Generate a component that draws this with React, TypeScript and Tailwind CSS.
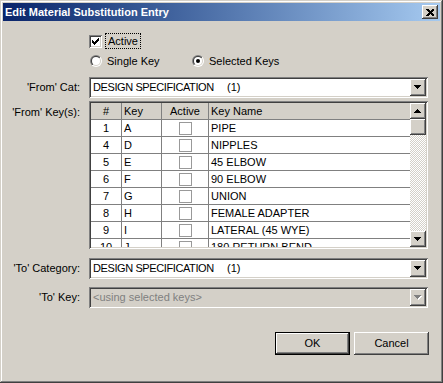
import React from "react";

const RAISED =
  "shadow-[inset_-1px_-1px_0_#404040,inset_1px_1px_0_#ffffff,inset_-2px_-2px_0_#808080,inset_2px_2px_0_#d4d0c8]";
const SUNKEN =
  "shadow-[inset_1px_1px_0_#808080,inset_-1px_-1px_0_#ffffff,inset_2px_2px_0_#404040,inset_-2px_-2px_0_#d4d0c8]";

function Tri({ up = false, disabled = false }: { up?: boolean; disabled?: boolean }) {
  return (
    <svg width="8" height="5" viewBox="0 0 8 5" shapeRendering="crispEdges">
      {disabled && (
        <polygon points={up ? "4.5,1 8,5 1,5" : "1,1 8,1 4.5,5"} fill="#ffffff" />
      )}
      <polygon
        points={up ? "3.5,0 7,4 0,4" : "0,0 7,0 3.5,4"}
        fill={disabled ? "#808080" : "#000000"}
      />
    </svg>
  );
}

function DropBtn({ disabled = false }: { disabled?: boolean }) {
  return (
    <div className={`w-[16px] h-full bg-[#d4d0c8] flex items-center justify-center ${RAISED}`}>
      <Tri disabled={disabled} />
    </div>
  );
}

function Combo({ children, disabled = false }: { children: React.ReactNode; disabled?: boolean }) {
  return (
    <div className={`w-[339px] h-[21px] p-[2px] ${SUNKEN} ${disabled ? "bg-[#d4d0c8]" : "bg-white"}`}>
      <div className="flex h-full">
        <div className={`flex-1 flex items-center pl-[2px] whitespace-pre ${disabled ? "text-[#808080]" : "text-black"}`}>
          {children}
        </div>
        <DropBtn disabled={disabled} />
      </div>
    </div>
  );
}

function Radio({ checked }: { checked: boolean }) {
  return (
    <svg width="12" height="12" viewBox="0 0 12 12">
      <defs>
        <linearGradient id="rgo" x1="0" y1="0" x2="1" y2="1">
          <stop offset="0.5" stopColor="#808080" />
          <stop offset="0.5" stopColor="#ffffff" />
        </linearGradient>
        <linearGradient id="rgi" x1="0" y1="0" x2="1" y2="1">
          <stop offset="0.5" stopColor="#404040" />
          <stop offset="0.5" stopColor="#d4d0c8" />
        </linearGradient>
      </defs>
      <circle cx="6" cy="6" r="6" fill="url(#rgo)" />
      <circle cx="6" cy="6" r="5" fill="url(#rgi)" />
      <circle cx="6" cy="6" r="4" fill="#ffffff" />
      {checked && <circle cx="6" cy="6" r="2" fill="#000000" />}
    </svg>
  );
}

function CheckBox({ checked }: { checked: boolean }) {
  return (
    <div className={`w-[13px] h-[13px] bg-white ${SUNKEN} relative`}>
      {checked && (
        <svg width="13" height="13" viewBox="0 0 13 13" className="absolute left-0 top-0" shapeRendering="crispEdges">
          <polygon points="3,5 5,7 10,2 10,5 5,10 3,8" fill="#000000" />
        </svg>
      )}
    </div>
  );
}

const rows: [string, string, string][] = [
  ["1", "A", "PIPE"],
  ["4", "D", "NIPPLES"],
  ["5", "E", "45 ELBOW"],
  ["6", "F", "90 ELBOW"],
  ["7", "G", "UNION"],
  ["8", "H", "FEMALE ADAPTER"],
  ["9", "I", "LATERAL (45 WYE)"],
  ["10", "J", "180 RETURN BEND"],
];

function Label({ children, top = false }: { children: React.ReactNode; top?: boolean }) {
  return (
    <div className={`w-[77px] text-right shrink-0 ${top ? "pt-[5px]" : "self-center"}`}>{children}</div>
  );
}

function CatText() {
  return (
    <>
      <span className="inline-block w-[134px] tracking-[-0.4px]">DESIGN SPECIFICATION</span>
      <span>(1)</span>
    </>
  );
}

export default function App() {
  return (
    <div className="w-[443px] h-[383px] bg-[#d4d0c8] p-[3px] flex flex-col font-['Liberation_Sans',Arial,sans-serif] text-[11px] leading-[13px] text-black shadow-[inset_-1px_-1px_0_#404040,inset_1px_1px_0_#d4d0c8,inset_-2px_-2px_0_#808080,inset_2px_2px_0_#ffffff] overflow-hidden">
      {/* Title bar */}
      <div className="h-[18px] shrink-0 bg-linear-to-r from-[#0a246a] to-[#a6caf0] flex items-center pl-[2px] pr-[2px]">
        <span className="flex-1 text-white font-bold text-[11px]">Edit Material Substitution Entry</span>
        <div className={`w-[16px] h-[14px] bg-[#d4d0c8] flex items-center justify-center ${RAISED}`}>
          <svg width="8" height="7" viewBox="0 0 8 7" shapeRendering="crispEdges">
            <path d="M0,0h2l2,2l2,-2h2v1l-2.5,2.5l2.5,2.5v1h-2l-2,-2l-2,2h-2v-1l2.5,-2.5l-2.5,-2.5z" fill="#000000" />
          </svg>
        </div>
      </div>

      {/* Active checkbox */}
      <div className="mt-[12px] h-[16px] flex items-center pl-[86px]">
        <CheckBox checked />
        <div className="ml-[3px] h-[16px] px-[2px] flex items-center border border-dotted border-black">Active</div>
      </div>

      {/* Radios */}
      <div className="mt-[4px] h-[16px] flex items-center pl-[87px]">
        <div className="w-[102px] flex items-center">
          <Radio checked={false} />
          <span className="ml-[5px]">Single Key</span>
        </div>
        <Radio checked />
        <span className="ml-[5px]">Selected Keys</span>
      </div>

      {/* From Cat */}
      <div className="mt-[8px] flex">
        <Label>'From' Cat:</Label>
        <div className="ml-[9px]">
          <Combo>
            <CatText />
          </Combo>
        </div>
      </div>

      {/* From Keys grid */}
      <div className="mt-[3px] flex">
        <Label top>'From' Key(s):</Label>
        <div className={`ml-[9px] w-[339px] h-[148px] p-[2px] bg-white ${SUNKEN}`}>
          <div className="flex h-full">
            <div className="flex-1 overflow-hidden">
              <div className="flex h-[17px] bg-[#d4d0c8] border-b border-[#808080]">
                <div className="w-[31px] border-r border-[#808080] flex items-center justify-center">#</div>
                <div className="w-[40px] border-r border-[#808080] flex items-center pl-[2px]">Key</div>
                <div className="w-[47px] border-r border-[#808080] flex items-center justify-center">Active</div>
                <div className="flex-1 flex items-center pl-[2px]">Key Name</div>
              </div>
              {rows.map(([n, k, name]) => (
                <div key={n} className="flex h-[17px] shrink-0 bg-white border-b border-[#808080]">
                  <div className="w-[31px] border-r border-[#808080] flex items-center justify-center">{n}</div>
                  <div className="w-[40px] border-r border-[#808080] flex items-center pl-[2px]">{k}</div>
                  <div className="w-[47px] border-r border-[#808080] flex items-center justify-center">
                    <div className="w-[13px] h-[13px] border border-[#999999] bg-white" />
                  </div>
                  <div className="flex-1 flex items-center pl-[2px] whitespace-nowrap">{name}</div>
                </div>
              ))}
            </div>
            {/* Scrollbar */}
            <div className="w-[16px] h-full flex flex-col">
              <div className={`h-[16px] shrink-0 bg-[#d4d0c8] flex items-center justify-center ${RAISED}`}>
                <Tri up />
              </div>
              <div className="flex-1 flex flex-col bg-[repeating-conic-gradient(#ffffff_0%_25%,#d4d0c8_0%_50%)] bg-[length:2px_2px]">
                <div className={`h-[16px] shrink-0 bg-[#d4d0c8] ${RAISED}`} />
              </div>
              <div className={`h-[16px] shrink-0 bg-[#d4d0c8] flex items-center justify-center ${RAISED}`}>
                <Tri />
              </div>
            </div>
          </div>
        </div>
      </div>

      {/* To Category */}
      <div className="mt-[9px] flex">
        <Label>'To' Category:</Label>
        <div className="ml-[9px]">
          <Combo>
            <CatText />
          </Combo>
        </div>
      </div>

      {/* To Key */}
      <div className="mt-[8px] flex">
        <Label>'To' Key:</Label>
        <div className="ml-[9px]">
          <Combo disabled>&lt;using selected keys&gt;</Combo>
        </div>
      </div>

      {/* Buttons */}
      <div className="mt-[24px] flex justify-end pr-[11px] gap-[4px]">
        <button className="w-[75px] h-[23px] bg-[#d4d0c8] flex items-center justify-center shadow-[inset_0_0_0_1px_#000000,inset_-2px_-2px_0_#404040,inset_2px_2px_0_#ffffff,inset_-3px_-3px_0_#808080]">
          OK
        </button>
        <button className={`w-[75px] h-[23px] bg-[#d4d0c8] flex items-center justify-center ${RAISED}`}>
          Cancel
        </button>
      </div>
    </div>
  );
}
